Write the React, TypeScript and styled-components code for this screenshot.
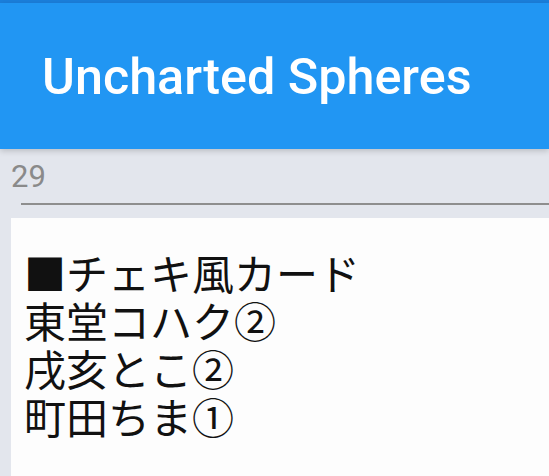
import React from "react";
import styled, { createGlobalStyle } from "styled-components";

const Global = createGlobalStyle`
  html, body { margin: 0; padding: 0; }
  body { background: #e3e6ed; overflow: hidden; }
`;

const Page = styled.div`
  width: 549px;
  height: 476px;
  display: flex;
  flex-direction: column;
  background: #e3e6ed;
  overflow: hidden;
`;

const StatusStrip = styled.div`
  height: 3px;
  background: #1b7fdc;
`;

const Header = styled.header`
  height: 146px;
  background: #2196f3;
  display: flex;
  align-items: center;
  padding-left: 42px;
  box-shadow: 0 2px 6px rgba(0, 0, 0, 0.18);
  position: relative;
  z-index: 1;
`;

const Title = styled.h1`
  margin: 0;
  font-family: Roboto, "Noto Sans", sans-serif;
  font-weight: 500;
  font-size: 50.3px;
  color: #ffffff;
`;

const Body = styled.main`
  flex: 1;
  display: flex;
  flex-direction: column;
  padding-left: 11px;
`;

const Count = styled.div`
  font-family: Roboto, "Noto Sans", sans-serif;
  font-size: 31px;
  color: #8a8a8a;
  padding: 10px 0 0 0;
  line-height: 36px;
`;

const Rule = styled.hr`
  margin: 8px 0 0 10px;
  border: none;
  border-top: 2px solid #8e8e8e;
`;

const Card = styled.section`
  margin-top: 13px;
  flex: 1;
  background: #fdfdfd;
  padding: 30px 0 0 13px;
`;

const Line = styled.div`
  font-family: "Noto Sans CJK JP", "Noto Sans", sans-serif;
  font-size: 42px;
  line-height: 48px;
  color: #111111;
  white-space: nowrap;
`;

const lines = ["■チェキ風カード", "東堂コハク②", "戌亥とこ②", "町田ちま①"];

export default function App() {
  return (
    <>
      <Global />
      <Page>
        <StatusStrip />
        <Header>
          <Title>Uncharted Spheres</Title>
        </Header>
        <Body>
          <Count>29</Count>
          <Rule />
          <Card>
            {lines.map((l) => (
              <Line key={l}>{l}</Line>
            ))}
          </Card>
        </Body>
      </Page>
    </>
  );
}
